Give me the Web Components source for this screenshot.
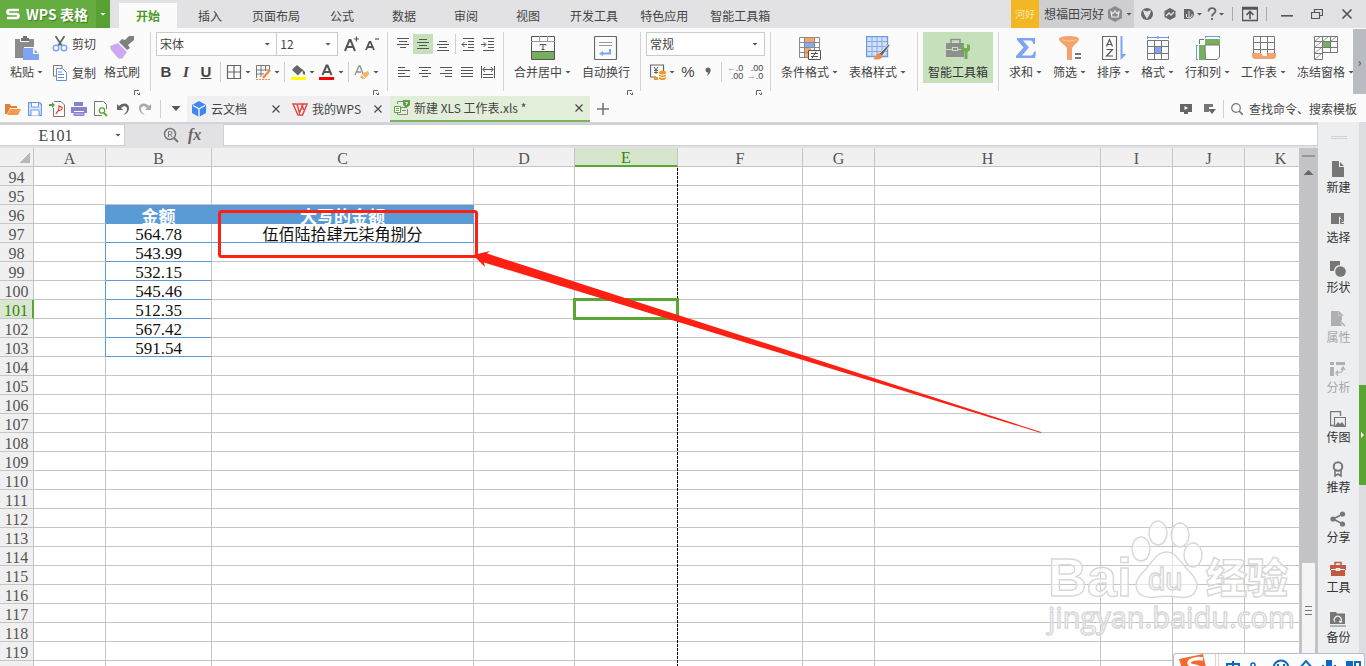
<!DOCTYPE html>
<html lang="zh-CN">
<head>
<meta charset="utf-8">
<title>新建 XLS 工作表.xls - WPS 表格</title>
<style>
  html, body { height: 100%; }
  body {
    margin: 0;
    overflow: hidden;
    font: 12px/16px "Noto Sans CJK SC", sans-serif;
    color: #444;
    --green: #5ba632;
    --bar: #e2e2e4;
    --cell-font: "Liberation Serif", "Noto Sans CJK SC", serif;
  }
</style>
</head>
<body>
<wps-window></wps-window>

<script>
/****************************
 * Icons, drawn on a pixel grid
 ****************************/
const ICONS = {
  wps: [14, 12, '<path d="M13 2H3.500a2 2 0 0 0 0 4h7a2 2 0 0 1 0 4H1" fill="none" stroke="#fff" stroke-width="2.600"/>'],
  shield: [16, 16, '<path d="M8 0l7 4v8l-7 4-7-4V4z" fill="#8c8c8f"/><path d="M4 6l2 1.500 2-2.500 2 2.500 2-1.500-1 5H5z" fill="none" stroke="#eee" stroke-width="1.200"/>'],
  shirt: [14, 14, '<circle cx="7" cy="7" r="6" fill="#666"/><path d="M3 3l4 1.500 4-1.500-1 4-3 5-3-5z" fill="#e2e2e4"/>'],
  chat: [14, 14, '<path d="M7 1l5.500 3v6L7 13l-5.500-3V4z" fill="#666"/><path d="M3 9l3-3 2 2 3-3" fill="none" stroke="#e2e2e4" stroke-width="1.300"/>'],
  docer: [12, 14, '<path d="M1 2h5a5 5 0 0 1 0 10H1z" fill="#666"/><path d="M6 4v7M3.500 7v3l2.500 1 3-1.500V7" fill="none" stroke="#e2e2e4"/>'],
  help: [10, 14, '<path d="M1.500 4.500C1.500 0 8.500 0 8.500 4c0 2.500-3.500 2.500-3.500 5.500" fill="none" stroke="#666" stroke-width="1.800"/><path d="M4 11h2v2H4z" fill="#666"/>'],
  ribbonUp: [16, 16, '<path d="M.5 1.500h15v13H.5zM.5 3h15" fill="none" stroke="#555" stroke-width="1.400"/><path d="M8 13V6M4.500 9L8 5.500 11.500 9" fill="none" stroke="#555" stroke-width="1.600"/>'],
  min: [12, 12, '<path d="M0 7h12v1.600H0z" fill="#555"/>'],
  restore: [12, 12, '<path d="M.5 4.500h8v6h-8zM3.500 4V1.500h8v6H9" fill="none" stroke="#555" stroke-width="1.200"/>'],
  close: [12, 12, '<path d="M1.500 1.500l9 9M10.500 1.500l-9 9" stroke="#555" stroke-width="1.700"/>'],

  paste: [24, 24, '<path d="M0 3h5v3h9V3h5v8H9v11H0z" fill="#8c8c8c"/><path d="M6 2h2V0h4v2h2v3H6z" fill="#737373"/><path d="M8 12h10l6 6v6H8z" fill="#7fa4f2"/><path d="M18 12v6h6z" fill="#fff"/><path d="M19.500 13.500V17H23z" fill="#7fa4f2"/>'],
  cut: [16, 16, '<path d="M3.500 0L10 10M12.500 0L6 10" stroke="#666" stroke-width="1.800"/><circle cx="4" cy="12" r="2.800" fill="none" stroke="#7fa4f2" stroke-width="1.500"/><circle cx="12" cy="12" r="2.800" fill="none" stroke="#7fa4f2" stroke-width="1.500"/>'],
  copy: [16, 16, '<path d="M4 11H1.500V.5H10V3" fill="none" stroke="#777"/><path d="M4.500 3.500h6l4 4v8h-10z" fill="#fff" stroke="#5f8ee8"/><path d="M6 7h4M6 9.500h6M6 12.500h6" stroke="#5f8ee8"/>'],
  brush: [24, 24, '<path d="M19 0h5v4l-6 5 2 3-3 2-8-8 3-3 3 1z" fill="#808080"/><path d="M8 7l9 9-5 7-2-1-1 1-8-9-1-4z" fill="#cfa8f4"/>'],
  fontUp: [16, 16, '<path d="M1 15L5.500 4h1L11 15M2.500 11h7" fill="none" stroke="#555" stroke-width="2"/><path d="M10 3h5M12.500.5v5" stroke="#555" stroke-width="1.200"/>'],
  fontDown: [16, 16, '<path d="M2 14L5.500 6h1L10 14M3 11h6" fill="none" stroke="#555" stroke-width="1.800"/><path d="M11 3h4" stroke="#555" stroke-width="1.200"/>'],
  border: [16, 16, '<path d="M1.500 1.500h13v13h-13zM8 2v12M2 8h12" fill="none" stroke="#666" stroke-width="1.200"/>'],
  drawBorder: [16, 16, '<path d="M1.500 14V1.500h13V6M6 2v11M10.500 2v5M2 6h12M2 10h7" fill="none" stroke="#777"/><path d="M8 14l7-8" stroke="#ec8a4f" stroke-width="2.400"/><path d="M1 15.500h14" stroke="#ec8a4f" stroke-dasharray="2 1"/>'],
  fill: [16, 16, '<path d="M2 6l5-5 6 5-5 5.500z" fill="#666"/><path d="M3 6c1-4 7-4 7 0" fill="none" stroke="#666"/><path d="M12 5l3 3v3l-2-1z" fill="#666"/><path d="M1 13h15v3H1z" fill="#ff0"/>'],
  fontColor: [16, 16, '<path d="M3.500 11L7.500 1.500h1l4 9.500M5 8h6" fill="none" stroke="#555" stroke-width="2"/><path d="M0 13h15v3H0z" fill="#f00"/>'],
  eraser: [16, 16, '<path d="M1 11L5 2h1l3 8M3 8h4" fill="none" stroke="#8f8f8f" stroke-width="1.300"/><path d="M9 9l5-2 1.500 3-5 5H8l-2-2z" fill="#f5b56b"/><path d="M8 11l3 3" stroke="#fff"/>'],
  vTop: [14, 14, '<path d="M1 1.500h12M3 4.500h8M1 7.500h12M4 10.500h6" stroke="#555"/>'],
  vMid: [14, 14, '<path d="M3 2.500h8M1 5.500h12M3 8.500h8M1 11.500h12" stroke="#555"/>'],
  vBot: [14, 14, '<path d="M3 4.500h8M1 7.500h12M3 10.500h8M1 13.500h12" stroke="#555"/>'],
  outdent: [14, 14, '<path d="M2 1.500h11M7 4.500h6M7 7.500h6M2 13.500h11M7 10.500h6M6 7.500H1M3.500 5L1 7.500 3.500 10" fill="none" stroke="#555"/>'],
  indent: [14, 14, '<path d="M2 1.500h11M7 4.500h6M7 7.500h6M2 13.500h11M7 10.500h6M0 7.500h5M2.500 5L5 7.500 2.500 10" fill="none" stroke="#555"/>'],
  left: [14, 14, '<path d="M1 2.500h7M1 5.500h12M1 8.500h7M1 11.500h12" stroke="#555"/>'],
  center: [14, 14, '<path d="M1 2.500h12M4 5.500h6M1 8.500h12M4 11.500h6" stroke="#555"/>'],
  right: [14, 14, '<path d="M1 2.500h12M6 5.500h7M1 8.500h12M6 11.500h7" stroke="#555"/>'],
  justify: [14, 14, '<path d="M1 2.500h12M1 5.500h12M1 8.500h12M1 11.500h12" stroke="#555"/>'],
  spread: [16, 14, '<path d="M1.500 1v12M14.500 1v12M3 4.500h10M5 2L3 4.500 5 7M11 2l2 2.500L11 7M3 9.500h10M3 12.500h10" fill="none" stroke="#555"/>'],
  merge: [24, 24, '<path d="M.5 15.500h23v8H.5z" fill="#76b05c"/><path d="M.5.5h23v23H.5zM0 15.500h24" fill="none" stroke="#555"/><path d="M0 5.500h24M8.500 0v5M16.500 0v5" stroke="#999"/><path d="M9 9.500V8.500h6v1M12 8.500v5M10.500 13.500h3" fill="none" stroke="#555"/>'],
  wrap: [24, 24, '<rect x=".5" y=".5" width="22" height="23" rx="1" fill="none" stroke="#666" stroke-width="1.200"/><path d="M5 6.500h13M5 9.500h13" stroke="#999"/><path d="M15 13h2v5.500H9V20l-4-2.500L9 15v1.500h6z" fill="#7fa4f2"/>'],
  money: [16, 16, '<path d="M6 13H.5V1h13v6" fill="none" stroke="#666" stroke-width="1.200"/><path d="M4 3l2 3 2-3M6 6v4M4 6.500h4M4 8.500h4" fill="none" stroke="#666"/><ellipse cx="12.500" cy="8.500" rx="3.500" ry="2" fill="#f2982b"/><path d="M9 10.500c2 1.500 5 1.500 7 0V12c-2 1.500-5 1.500-7 0zM9 13c2 1.500 5 1.500 7 0v1.500c-2 2-5 2-7 0zM4 13h4v3H4z" fill="#f2982b"/>'],
  comma: [8, 16, '<circle cx="4" cy="6" r="2.500" fill="#666"/><path d="M6.500 6c0 3-1.500 5-4 6 1.500-2 1.500-3 1.500-4z" fill="#666"/>'],
  cond: [24, 24, '<path d="M7 1h10v5H7zM7 12h6v10H7z" fill="#f6a56c"/><path d="M7 6h10v5H7z" fill="#86aaf3"/><path d="M1.500 1.500h20v20h-20zM6.500 1v20M16.500 1v13M1 6.500h21M1 11.500h21M1 16.500h9" fill="none" stroke="#8a8a8a"/><path d="M10.500 14.500h12v9h-12z" fill="#fff" stroke="#555"/><path d="M13 17.500h7M13 20.500h7M18 15.500l-4 7" stroke="#555"/>'],
  style: [24, 24, '<path d="M.5.5h21v20H.5z" fill="#d2e0f8" stroke="#6f99e8" stroke-width="1.400"/><path d="M1 5.500h20M1 10.500h20M1 15.500h20M6 1v19M11 1v19M16 1v19" stroke="#85a8ea"/><path d="M13 18L23 8l1 1-8 11z" fill="#666" stroke="#fbfbfb" stroke-width=".6"/><path d="M13 17l4 3c-2 4-6 4-10 3 3-1 3-5 6-6z" fill="#f08a3c"/>'],
  toolbox: [24, 24, '<path d="M0 7h18v6H0zM0 14h18v7H0z" fill="#8e8e8e"/><path d="M5 7V3.500h9V7" fill="none" stroke="#8e8e8e" stroke-width="1.500"/><path d="M6 11h6v4H6z" fill="#c5e0bb"/><path d="M7 12h4v2H7z" fill="#8e8e8e"/><path d="M15 9l3-1v4h3V8l3 1v5l-2.500 2v7h-3v-7L15 14z" fill="#6fae54"/>'],
  sum: [24, 24, '<path d="M3 2h18v6h-2c0-3-1-3.500-3-3.500H9l6 7-7 8h8c3 0 3-1 4-4h2l-1 6.500H2v-2l7.500-8.500L3 4z" fill="#7fa4f2"/>'],
  filter: [24, 24, '<path d="M1 3c0-4 20-4 20 0 0 3-7 7-7 10v11H9V13C9 10 1 6 1 3z" fill="#f2a46c"/><path d="M4 3.500c4 2 10 2 14 0" stroke="#fbc9a5" fill="none"/><path d="M17 17h6v2h-6zM17 21h6v2h-6z" fill="#777"/>'],
  sort: [24, 24, '<path d="M.5.5h14v23H.5z" fill="none" stroke="#666" stroke-width="1.200"/><path d="M4.500 10.500l3-7 3 7M5.500 8.500h4M4.500 13.500h6l-6 6.500h6.500" fill="none" stroke="#555" stroke-width="1.200"/><path d="M18.500 0h2v18h4l-6 6z" fill="#7fa4f2"/>'],
  format: [24, 24, '<path d="M1 1.500h22M1.500 0v3M22.500 0v3M12 0v3" stroke="#6f99e8"/><path d="M8.500 10.500h7v7h-7z" fill="#7fa4f2"/><path d="M1.500 4.500h21v19h-21zM8.500 5v18M15.500 5v18M2 10.500h20M2 17.500h20" fill="none" stroke="#777"/>'],
  rowcol: [24, 24, '<path d="M9 3h15v6H9zM3 9h6v15H3z" fill="#76b05c"/><path d="M9 9h14.500v12l-2.500 2.500H9.500z" fill="#fff" stroke="#777"/><path d="M9 .5h15M.5 9v15M9.500 0v2M23.500 0v2M0 9.500h2M0 23.500h2" stroke="#6f99e8"/><path d="M3.500 8V3.500H8" fill="none" stroke="#777"/>'],
  sheet: [24, 24, '<path d="M1.500.5h21v20h-21zM8.500 0v20M15.500 0v20M2 6.500h20M2 13.500h20" fill="none" stroke="#777"/><path d="M0 17h9l2 3h4l1-3h8v4l-2 2H2l-2-2z" fill="#f2a46c"/>'],
  freeze: [24, 24, '<path d="M9 6h7v6H9z" fill="#76b05c"/><path d="M.5.5h23v16h-15v7h-8zM8.500 1v16M16.500 1v16M1 5.500h22M1 11.500h22M1 17.500h8" fill="none" stroke="#777"/><path d="M1 5l5-4M9 5l5-4M17 5l5-4M1 11l6-5M1 17l6-5M1 23l6-5" stroke="#999"/>'],
  launcher: [6, 6, '<path d="M.5 5V.5H5M2.500 5.500h3v-3M3 3l2 2" fill="none" stroke="#666"/>'],

  open: [16, 16, '<path d="M0 3h5l1 2h6v2H5l-3 6H0z" fill="#e0803c"/><path d="M5 8h11l-3 6H2z" fill="#f59b4a"/>'],
  save: [14, 14, '<path d="M.5.5h11l2 2v11H.5z" fill="#dbe7fb" stroke="#6f99e8" stroke-width="1.300"/><path d="M3.500 1v4h7V1M3 13.500V8h8v5.500" fill="#fff" stroke="#6f99e8"/>'],
  pdf: [16, 16, '<path d="M5 .5h7l3.500 3.500v11.500H4.500V7" fill="none" stroke="#777"/><path d="M0 3h3V1l3 3-3 3V5H0z" fill="#5ba632"/><path d="M7 13c3-4 3-5 3-8 2 1 4 1 3 3s-4 1-5 3z" fill="none" stroke="#e0483c" stroke-width="1.200"/>'],
  print: [16, 16, '<path d="M3 1h9v4H3z" fill="#8583c9"/><path d="M0 6h16v6h-3v-2H3v2H0z" fill="#8583c9"/><path d="M3 11.500h10v3H3z" fill="#a9a7de" stroke="#8583c9"/>'],
  preview: [14, 16, '<path d="M8 14.500H.5V.5h9l3 3V8" fill="none" stroke="#777"/><circle cx="8" cy="9.500" r="2.700" fill="#fff" stroke="#5ba632" stroke-width="1.300"/><path d="M10 12l3 3" stroke="#5ba632" stroke-width="1.800"/>'],
  undo: [14, 16, '<path d="M1 3v6h6L5 7c3-3 6-2 6 1 0 2-1 4-4 6 4-1 6-4 6-7 0-5-6-6-10-2z" fill="#666"/>'],
  redo: [14, 16, '<path d="M13 3v6H7l2-2C6 4 3 5 3 8c0 2 1 4 4 6-4-1-6-4-6-7 0-5 6-6 10-2z" fill="#aaa"/>'],
  cloud: [16, 16, '<path d="M8 0l7 4v8l-7 4-7-4V4z" fill="#3f86f0"/><path d="M2 4.500l6 3.200 6-3.200M8 8v8" fill="none" stroke="#fff" stroke-width="1.300"/>'],
  mywps: [16, 14, '<path d="M1 2h4l2.500 9L11 2h4l-4.500 11H6z" fill="#fff" stroke="#e8433f" stroke-width="1.500"/><path d="M6 2h4l1.500 6" fill="none" stroke="#e8433f" stroke-width="1.500"/>'],
  xls: [16, 16, '<path d="M3.500 4V1.500H10M13.500 9v5.500h-10V13M6 7.500h6M8 10.500h4" fill="none" stroke="#888"/><path d="M.5 6.500h6v6h-6z" fill="#fff" stroke="#5ba632"/><path d="M2 8.500h3M2 10.500h3" stroke="#5ba632"/><path d="M9 0h7v5l-3.500 3L9 5z" fill="#5b9f48"/><path d="M11.500 2.500h2L12 5" fill="none" stroke="#fff"/>'],
  x: [8, 8, '<path d="M.5.5l7 7M7.500.5l-7 7" stroke="#444" stroke-width="1.100"/>'],
  plus: [12, 12, '<path d="M6 0v12M0 6h12" stroke="#777" stroke-width="1.600"/>'],
  play: [12, 12, '<path d="M0 1h12v8H8v2H4V9H0z" fill="#666"/><path d="M4.500 3v4L8 5z" fill="#fff"/>'],
  skin: [12, 12, '<path d="M0 1h9v3H5v5H0z" fill="#777"/><path d="M4 6h8L8 11z" fill="#666"/>'],
  search: [12, 12, '<circle cx="5" cy="5" r="4.300" fill="none" stroke="#777" stroke-width="1.200"/><path d="M8 8l4 4" stroke="#777" stroke-width="1.600"/>'],
  find: [16, 16, '<circle cx="7" cy="7" r="5.500" fill="none" stroke="#777" stroke-width="1.500"/><path d="M11 11l4 4" stroke="#777" stroke-width="2.200"/><path d="M5.500 10V4.500h2a1.500 1.500 0 0 1 0 3h-2M7.500 7.500L9 10" fill="none" stroke="#777"/>'],

  pNew: [16, 16, '<path d="M2 0h7v6h5v10H2z" fill="#777"/><path d="M10 1l4 4h-4z" fill="#777"/>'],
  pSelect: [16, 16, '<path d="M1 2h13v11H1z" fill="#777"/><path d="M9 5v9l2-2h4z" fill="#eceef0"/><path d="M10 7v6l2-2h2z" fill="#777"/>'],
  pShape: [16, 16, '<path d="M0 0h10v4a6 6 0 0 0-6 6H0z" fill="#777"/><circle cx="10.500" cy="10.500" r="5.300" fill="#777"/>'],
  pProp: [16, 16, '<path d="M1 0h7v5h4v4l-2 2 2 4H1z" fill="#b0b0b2"/><path d="M9 1l3 3H9zM8 8l7 7" fill="#b0b0b2" stroke="#b0b0b2" stroke-width="1.500"/>'],
  pAnalyse: [16, 16, '<path d="M0 1h4v3H0zM6 1h9v3H6zM0 6h4v9H0z" fill="#b0b0b2"/><path d="M6 12c5 0 7-1 7-5M11 9l2-3 2 3M8 9.500L6 12l2 3" fill="none" stroke="#b0b0b2" stroke-width="1.300"/>'],
  pImage: [16, 16, '<path d="M4 14.500H.5V.5h10V5" fill="none" stroke="#777" stroke-width="1.300"/><path d="M4.500 6.500h11v9h-11z" fill="none" stroke="#777" stroke-width="1.200"/><path d="M5 15l3-4 2 2 2-2 3 4z" fill="#777"/>'],
  pMedal: [16, 16, '<circle cx="8" cy="5.500" r="4.300" fill="none" stroke="#777" stroke-width="2"/><path d="M5 9v6l3-2 3 2V9" fill="none" stroke="#777" stroke-width="1.600"/>'],
  pShare: [16, 16, '<path d="M13 3L3 8l10 5" fill="none" stroke="#777" stroke-width="1.500"/><circle cx="12.500" cy="3" r="2.600" fill="#777"/><circle cx="3" cy="8" r="2.600" fill="#777"/><circle cx="12.500" cy="13" r="2.600" fill="#777"/>'],
  pTool: [16, 16, '<path d="M0 4h16v5H0zM1 9h14v6H1z" fill="#c05a41"/><path d="M5 4V1.500h6V4" fill="none" stroke="#c05a41" stroke-width="1.500"/><path d="M1 8.500h14M6 7.500h4v2H6z" stroke="#eceef0" fill="#c05a41"/>'],
  pBackup: [16, 16, '<path d="M0 1h6l1 1.500h8V13H0z" fill="#777"/><path d="M5 11a3.500 3.500 0 1 1 5.500 0M9 10l1.500 1.500L12 10" fill="none" stroke="#eceef0" stroke-width="1.200"/><path d="M0 15h16" stroke="#777"/>'],
};

const CARET = '<i class="caret"></i>';
const SHARED = `
  *, *::before { box-sizing: border-box; }
  button { font: inherit; color: inherit; background: none; border: 0; padding: 0; margin: 0; }
  input, select { font: inherit; color: inherit; border: 0; padding: 0; background: none; outline: none; appearance: none; min-width: 0; }
  .caret { flex: none; width: 6px; height: 3px; background: #555; clip-path: polygon(0 0, 100% 0, 50% 100%); }
  .sep { flex: none; width: 1px; background: #d0d0d2; }
`;

function define(name, css, html) {
  customElements.define(name, class extends HTMLElement {
    constructor() {
      super();
      this.attachShadow({ mode: 'open' });
    }
    connectedCallback() {
      const body = typeof html === 'function' ? html(this) : html;
      this.shadowRoot.innerHTML = `<style>${SHARED}${css}</style>${body}`;
    }
  });
}

const icon = name => `<wps-icon name="${name}"></wps-icon>`;

define('wps-icon', `
  :host { display: inline-flex; flex: none; }
  svg { display: block; }
`, el => {
  const [w, h, d] = ICONS[el.getAttribute('name')];
  return `<svg width="${w}" height="${h}" viewBox="0 0 ${w} ${h}" aria-hidden="true">${d}</svg>`;
});

/****************************
 * Title bar
 ****************************/
define('title-bar', `
  :host { display: flex; height: 28px; flex: none; background: var(--bar); }
  .brand { display: flex; align-items: center; width: 96px; padding-left: 6px; gap: 6px; background: #65ad40; color: #fff; font: bold 14px/20px "Noto Sans CJK SC", sans-serif; text-shadow: 1px 1px 1px #3d7a1f; white-space: nowrap; }
  .menu { display: flex; align-items: center; justify-content: center; width: 14px; background: #58a033; }
  .menu .caret { background: #fff; }
  nav { display: flex; flex: 1; padding-left: 7px; white-space: nowrap; }
  nav button { padding: 4px 19px 0; }
  nav button.wide { padding: 4px 11px 0; }
  nav button.on { margin: 3px 2px 0; padding: 0 17px; background: #fbfbfb; color: #4a9a22; font-weight: bold; }
  .user { display: flex; align-items: center; background: #cfcfd1; width: 123px; gap: 3px; white-space: nowrap; }
  .avatar { align-self: stretch; display: grid; place-items: center; width: 28px; margin-right: 2px; background: #f2b722; color: #fbe7a8; font-size: 10px; }
  .tools { display: flex; align-items: center; padding: 0 4px 0 1px; }
  .tools button { display: flex; align-items: center; justify-content: center; gap: 2px; min-width: 23px; height: 24px; }
  .tools .sep { height: 14px; margin: 0 5px; background: #aaa; }
  .tools .win { width: 30px; }
`, `
  <div class="brand">${icon('wps')}<span>WPS 表格</span></div>
  <button class="menu" aria-label="菜单">${CARET}</button>
  <nav>
    <button class="on">开始</button><button>插入</button><button class="wide">页面布局</button>
    <button>公式</button><button>数据</button><button>审阅</button><button>视图</button>
    <button class="wide">开发工具</button><button class="wide">特色应用</button><button class="wide">智能工具箱</button>
  </nav>
  <div class="user"><span class="avatar">河好</span><span>想福田河好</span>${icon('shield')}${CARET}</div>
  <div class="tools">
    <button aria-label="皮肤">${icon('shirt')}</button>
    <button aria-label="消息">${icon('chat')}</button>
    <button aria-label="稻壳">${icon('docer')}${CARET}</button>
    <button aria-label="帮助">${icon('help')}${CARET}</button>
    <i class="sep"></i>
    <button aria-label="隐藏功能区">${icon('ribbonUp')}</button>
    <i class="sep"></i>
    <button class="win" aria-label="最小化">${icon('min')}</button>
    <button class="win" aria-label="还原">${icon('restore')}</button>
    <button class="win" aria-label="关闭">${icon('close')}</button>
  </div>
`);

/****************************
 * Ribbon
 ****************************/
define('ribbon-group', `
  :host { display: flex; flex-direction: column; flex: none; height: 59px; border-right: 1px solid #d4d4d6; padding: 0 5px; box-sizing: border-box; }
  :host([last]) { flex: 1; border: 0; overflow: hidden; }
  :host([big]) { padding: 0 10px; }
  .body { display: flex; gap: 11px; height: 51px; }
  :host([rows]) .body { flex-direction: column; gap: 5px; }
  .foot { display: flex; flex: 1; align-items: flex-end; justify-content: flex-end; }
  :host(:not([big])) .foot { padding-right: 3px; }
`, el => `
  <div class="body"><slot></slot></div>
  <div class="foot">${el.hasAttribute('launch') ? `<button aria-label="更多设置">${icon('launcher')}</button>` : ''}</div>
`);

define('big-tool', `
  :host { display: block; flex: none; }
  button { display: flex; flex-direction: column; align-items: center; gap: 4px; height: 51px; padding-top: 4px; white-space: nowrap; }
  :host([on]) button { background: #c5e0bb; padding: 4px 5px 0; color: #333; }
  span { display: flex; align-items: center; gap: 3px; }
`, el => `<button>${icon(el.getAttribute('icon'))}<span><slot></slot>${el.hasAttribute('menu') ? CARET : ''}</span></button>`);

define('small-tool', `
  :host { display: block; flex: none; }
  button { display: flex; align-items: center; justify-content: center; gap: 3px; width: 20px; height: 20px; }
  :host([menu]) button { width: 25px; }
  :host([text]) button { width: auto; gap: 4px; white-space: nowrap; }
  :host([on]) button { background: #c5e0bb; }
`, el => {
  const name = el.getAttribute('icon');
  return `<button title="${el.title}">${name ? icon(name) : ''}<slot></slot>${el.hasAttribute('menu') ? CARET : ''}</button>`;
});

define('drop-box', `
  :host { display: block; }
  label { display: flex; align-items: center; height: 24px; padding: 0 6px 0 3px; border: 1px solid #cbcbcd; background: #fff; }
  select { flex: 1; height: 20px; }
`, el => `<label><select aria-label="${el.getAttribute('label')}"><option>${el.getAttribute('value')}</option></select>${CARET}</label>`);

define('ribbon-bar', `
  :host { display: flex; flex: none; height: 67px; padding-top: 4px; background: #fbfbfb; box-sizing: border-box; }
  .row { display: flex; align-items: center; height: 24px; }
  .row + .row { height: 22px; }
  .clip { width: 151px; }
  .font { width: 237px; }
  .align { width: 116px; }
  .merge { width: 137px; }
  .number { width: 130px; }
  .cond { width: 147px; }
  .stack { display: flex; flex-direction: column; gap: 9px; padding-top: 2px; margin: 0 -3px 0 -2px; }
  .gap { gap: 4px; }
  .gap .sep { margin-right: 1px; }
  .sep { height: 20px; }
  .biu { display: flex; font: bold 15px/20px "Liberation Sans", sans-serif; }
  .spread { justify-content: space-around; }
  .scroll { width: 13px; margin-top: -3px; height: 65px; background: #b9bbc3; color: #444; }
  .dec { font: 9px/8px "Liberation Sans", sans-serif; text-align: right; }
  .dec b { color: #6f99e8; }
`, `
  <ribbon-group class="clip" big launch>
    <big-tool icon="paste" menu>粘贴</big-tool>
    <div class="stack">
      <small-tool icon="cut" text>剪切</small-tool>
      <small-tool icon="copy" text>复制</small-tool>
    </div>
    <big-tool icon="brush">格式刷</big-tool>
  </ribbon-group>
  <ribbon-group class="font" rows launch>
    <div class="row">
      <drop-box style="width:122px" label="字体" value="宋体"></drop-box>
      <drop-box style="width:62px;margin-left:-1px" label="字号" value="12"></drop-box>
      <small-tool style="margin-left:4px" icon="fontUp" title="增大字号"></small-tool>
      <small-tool icon="fontDown" title="减小字号"></small-tool>
    </div>
    <div class="row gap">
      <div class="biu">
        <small-tool title="加粗">B</small-tool>
        <small-tool title="倾斜"><em style="font-family:'Liberation Serif'">I</em></small-tool>
        <small-tool title="下划线"><u>U</u></small-tool>
      </div>
      <i class="sep"></i>
      <small-tool icon="border" menu title="边框"></small-tool>
      <small-tool icon="drawBorder" menu title="绘制边框"></small-tool>
      <i class="sep"></i>
      <small-tool icon="fill" menu title="填充颜色"></small-tool>
      <small-tool icon="fontColor" menu title="字体颜色"></small-tool>
      <i class="sep"></i>
      <small-tool icon="eraser" menu title="清除"></small-tool>
    </div>
  </ribbon-group>
  <ribbon-group class="align" rows>
    <div class="row">
      <small-tool icon="vTop" title="顶端对齐"></small-tool>
      <small-tool icon="vMid" on title="垂直居中"></small-tool>
      <small-tool icon="vBot" title="底端对齐"></small-tool>
      <i class="sep" style="margin:0 2px"></i>
      <small-tool icon="outdent" title="减少缩进"></small-tool>
      <small-tool icon="indent" title="增加缩进"></small-tool>
    </div>
    <div class="row spread">
      <small-tool icon="left" title="左对齐"></small-tool>
      <small-tool icon="center" title="居中"></small-tool>
      <small-tool icon="right" title="右对齐"></small-tool>
      <small-tool icon="justify" title="两端对齐"></small-tool>
      <small-tool icon="spread" title="分散对齐"></small-tool>
    </div>
  </ribbon-group>
  <ribbon-group class="merge" big launch style="padding-right:7px">
    <big-tool icon="merge" menu>合并居中</big-tool>
    <big-tool icon="wrap">自动换行</big-tool>
  </ribbon-group>
  <ribbon-group class="number" rows launch>
    <drop-box label="数字格式" value="常规"></drop-box>
    <div class="row" style="height:22px;gap:3px;padding-left:4px">
      <small-tool icon="money" menu title="货币"></small-tool>
      <div class="biu" style="font-weight:normal"><small-tool title="百分比">%</small-tool><small-tool icon="comma" title="千位分隔"></small-tool></div>
      <i class="sep"></i>
      <div class="biu">
        <small-tool title="增加小数位数"><span class="dec"><b>←</b>.0<br>.00</span></small-tool>
        <small-tool title="减少小数位数"><span class="dec">.00<br><b>→</b>.0</span></small-tool>
      </div>
    </div>
  </ribbon-group>
  <ribbon-group class="cond" big>
    <big-tool icon="cond" menu>条件格式</big-tool>
    <big-tool icon="style" menu>表格样式</big-tool>
  </ribbon-group>
  <ribbon-group>
    <big-tool icon="toolbox" on>智能工具箱</big-tool>
  </ribbon-group>
  <ribbon-group big last style="padding-right:0">
    <big-tool icon="sum" menu>求和</big-tool>
    <big-tool icon="filter" menu>筛选</big-tool>
    <big-tool icon="sort" menu>排序</big-tool>
    <big-tool icon="format" menu>格式</big-tool>
    <big-tool icon="rowcol" menu>行和列</big-tool>
    <big-tool icon="sheet" menu>工作表</big-tool>
    <big-tool icon="freeze" menu>冻结窗格</big-tool>
  </ribbon-group>
  <button class="scroll" aria-label="向右滚动">›</button>
`);

/****************************
 * Quick access and document tabs
 ****************************/
define('doc-tab', `
  :host { display: flex; align-items: center; height: 26px; padding: 0 8px 0 4px; gap: 4px; background: #f0f0f2; white-space: nowrap; box-sizing: border-box; }
  :host([on]) { background: #e2eed9; border-bottom: 2px solid #7bb461; padding-right: 7px; }
  span { flex: 1; }
  button { display: flex; }
`, el => `${icon(el.getAttribute('icon'))}<span><slot></slot></span><button aria-label="关闭标签">${icon('x')}</button>`);

define('doc-bar', `
  :host { display: flex; flex: none; align-items: center; height: 27px; background: #fbfbfb; padding-left: 2px; box-sizing: border-box; }
  .quick { display: flex; align-items: center; }
  .quick button { display: grid; place-items: center; width: 22px; height: 22px; }
  .sep { height: 18px; margin: 0 4px; }
  .quick .more .caret { width: 9px; height: 5px; }
  .tabs { display: flex; flex: 1; align-items: center; }
  .plus { margin-left: 7px; display: flex; }
  .find { display: flex; align-items: center; white-space: nowrap; padding-right: 9px; gap: 6px; }
  .find .sep { margin: 0 1px; }
  .find button { display: flex; }
  .find .wide { margin-right: 6px; }
`, `
  <div class="quick">
    ${[['open', '打开'], ['save', '保存'], ['pdf', '输出为PDF'], ['print', '打印'], ['preview', '打印预览'], ['undo', '撤销'], ['redo', '恢复']]
      .map(([n, t]) => `<button title="${t}">${icon(n)}</button>`).join('')}
    <i class="sep"></i>
    <button class="more" title="自定义">${CARET}</button>
  </div>
  <div class="tabs">
    <doc-tab icon="cloud" style="width:101px">云文档</doc-tab>
    <doc-tab icon="mywps" style="width:102px">我的WPS</doc-tab>
    <doc-tab icon="xls" on style="width:200px">新建 XLS 工作表.xls *</doc-tab>
    <button class="plus" title="新建标签">${icon('plus')}</button>
  </div>
  <div class="find">
    <button class="wide" title="演示">${icon('play')}</button>
    <button title="外观">${icon('skin')}</button>
    <i class="sep"></i>
    ${icon('search')}<button>查找命令、搜索模板</button>
  </div>
`);

/****************************
 * Formula bar
 ****************************/
define('formula-bar', `
  :host { display: flex; flex: none; height: 26px; padding-bottom: 2px; border-top: 2px solid #d3d3da; background: var(--bar); font-family: var(--cell-font); font-size: 16px; box-sizing: border-box; }
  .name { display: flex; align-items: center; width: 125px; padding-right: 3px; background: #fff; border: 1px solid #d0d0d6; border-left: 0; }
  .name input { flex: 1; text-align: center; padding: 2px 4px 0 0; }
  .fx { display: flex; align-items: center; width: 98px; padding-left: 38px; gap: 9px; }
  .fx em { font-weight: bold; color: #666; }
  .text { flex: 1; background: #fff; border: 1px solid #d0d0d6; }
`, `
  <label class="name"><input aria-label="名称框" value="E101">${CARET}</label>
  <div class="fx">${icon('find')}<em>fx</em></div>
  <input class="text" aria-label="编辑栏">
`);

/****************************
 * Sheet
 ****************************/
const COLS = { A: 72, B: 106, C: 262, D: 101, E: 103, F: 125, G: 72, H: 226, I: 72, J: 72, K: 72 };
const AMOUNTS = { 97: '564.78', 98: '543.99', 99: '532.15', 100: '545.46', 101: '512.35', 102: '567.42', 103: '591.54' };
const WORDS = { 97: '伍佰陆拾肆元柒角捌分' };

function cell(col, row) {
  if (row === 96 && (col === 'B' || col === 'C')) return `<td class="head">${col === 'B' ? '金额' : '大写的金额'}</td>`;
  if (col === 'A' && row >= 96 && row <= 103) return '<td class="edge"></td>';
  if (col === 'B' && AMOUNTS[row]) return `<td class="amount">${AMOUNTS[row]}</td>`;
  if (col === 'C' && WORDS[row]) return `<td class="words edge">${WORDS[row]}</td>`;
  return '<td></td>';
}

function sheetTable() {
  const names = Object.keys(COLS);
  let rows = '';
  for (let r = 94; r <= 119; r++) {
    rows += `<tr><th scope="row"${r === 101 ? ' class="on"' : ''}>${r}</th>${names.map(c => cell(c, r)).join('')}</tr>`;
  }
  rows += `<tr><th></th>${names.map(() => '<td></td>').join('')}</tr>`;
  return `
    <table>
      <colgroup><col style="width:34px">${names.map(c => `<col style="width:${COLS[c]}px">`).join('')}</colgroup>
      <thead><tr><th class="corner"></th>${names.map(c => `<th scope="col"${c === 'E' ? ' class="on"' : ''}>${c}</th>`).join('')}</tr></thead>
      <tbody>${rows}</tbody>
    </table>`;
}

define('sheet-grid', `
  :host { display: block; position: relative; flex: 1; min-width: 0; overflow: hidden; background: #fff; font: 16px/14px var(--cell-font); }
  table { width: 1317px; table-layout: fixed; border-collapse: separate; border-spacing: 0; }
  th, td { height: 19px; padding: 4px 0 0; border: solid #c5c5c5; border-width: 0 1px 1px 0; text-align: center; white-space: nowrap; line-height: 14px; }
  th { font-weight: normal; color: #555; background: #f0f0f0; }
  td { color: #111; }
  thead th.on { background: #d6e6cc; color: #37850f; border-bottom: 2px solid var(--green); padding-top: 3px; }
  tbody th.on { background: #d9e7d0; color: #37850f; border-right: 2px solid var(--green); }
  .corner { background: linear-gradient(135deg, #f0f0f0 50%, #b9b9b9 50%) 20px 5px / 10px 10px no-repeat #f0f0f0; }
  .head { background: #5b9bd5; border-color: #5b9bd5; color: #fff; font: bold 17px/14px "Noto Sans CJK SC", sans-serif; }
  .edge { border-right-color: #5b9bd5; }
  .amount, .words { border-bottom-color: #5b9bd5; }
  .amount { font-size: 17px; }
  .break { position: absolute; left: 677px; top: 20px; bottom: 0; width: 1px; background: repeating-linear-gradient(#000 0 3px, #fff 3px 4px); }
  .cursor { position: absolute; left: 573px; top: 150px; width: 106px; height: 22px; border: 3px solid var(--green); }
  .mark { position: absolute; left: 0; top: 0; pointer-events: none; }
  baidu-mark { position: absolute; right: 0; bottom: 0; }
`, `
  ${sheetTable()}
  <div class="break"></div>
  <div class="cursor"></div>
  <svg class="mark" width="1060" height="300" fill="#fe2013">
    <rect x="219.500" y="63.500" width="257" height="45" rx="2" fill="none" stroke="#fe2013" stroke-width="3"/>
    <path d="M473 107L490 103L487 105.500L1041 284V285L484 114.500L485 119z"/>
  </svg>
  <baidu-mark></baidu-mark>
`);

define('baidu-mark', `
  :host { display: block; pointer-events: none; }
  svg { display: block; }
  text, ellipse, .pad { fill: #fff; fill-opacity: .55; stroke: #d8d8d8; stroke-width: 1.400; }
  text { font-family: "Open Sans", sans-serif; font-weight: bold; }
  .latin { font-family: "Liberation Sans", sans-serif; }
  .cn { font-family: "Noto Sans CJK SC", sans-serif; font-weight: 900; }
`, `
  <svg width="259" height="156">
    <text class="latin" x="8" y="86" font-size="54">Bai</text>
    <ellipse cx="101" cy="39" rx="9" ry="12"/>
    <ellipse cx="118" cy="23" rx="9" ry="12"/>
    <ellipse cx="140" cy="25" rx="9" ry="12"/>
    <ellipse cx="153" cy="45" rx="9" ry="12"/>
    <path class="pad" d="M127 42c9 0 13 10 20 17 8 8 12 14 9 21-3 8-12 8-18 7-8-1-14-1-22 0-8 1-16 0-19-7-3-8 2-14 9-21 7-8 11-17 21-17z"/>
    <text class="latin" x="108" y="80" font-size="31" style="font-weight:normal">du</text>
    <text class="cn" x="166" y="83" font-size="41">经验</text>
    <text x="8" y="118" font-size="29" style="font-weight:normal">jingyan.baidu.com</text>
  </svg>
`);

define('scroll-bar', `
  :host { display: flex; flex-direction: column; align-items: center; width: 19px; background: #c4c4c6; padding-top: 7px; box-sizing: border-box; }
  .split { width: 13px; height: 2px; background: #999; }
  .up { width: 10px; height: 5px; margin-top: 13px; background: #666; clip-path: polygon(50% 0, 100% 100%, 0 100%); }
  .track { flex: 394; }
  .thumb { flex: 97; width: 13px; display: flex; flex-direction: column; align-items: center; justify-content: center; gap: 3px; background: #f4f4f4; padding-bottom: 8px; }
  .thumb i { width: 7px; height: 1px; background: #777; }
`, `<i class="split"></i><button class="up" aria-label="向上滚动"></button><div class="track"></div><div class="thumb"><i></i><i></i><i></i></div>`);

/****************************
 * Task pane
 ****************************/
define('task-pane', `
  :host { display: flex; flex: none; }
  .items { display: flex; flex-direction: column; align-items: center; width: 41px; padding-top: 14px; background: #eceef0; overflow: hidden; }
  .grip { flex: none; width: 16px; height: 3px; border: solid #cfd2da; border-width: 1px 0; margin-bottom: 22px; }
  button { display: flex; flex-direction: column; align-items: center; flex: none; height: 50px; gap: 2px; white-space: nowrap; color: #333; }
  button:disabled { color: #a8a8aa; }
  .rail { display: flex; flex-direction: column; justify-content: center; width: 7px; background: #dcdde0; padding-top: 82px; }
  .tab { display: grid; place-items: center; height: 100px; background: var(--green); }
  .tab::before { content: ""; width: 3px; height: 6px; background: #fff; clip-path: polygon(0 0, 100% 50%, 0 100%); }
`, `
  <div class="items">
    <i class="grip"></i>
    ${[['pNew', '新建'], ['pSelect', '选择'], ['pShape', '形状'], ['pProp', '属性', 1], ['pAnalyse', '分析', 1], ['pImage', '传图'], ['pMedal', '推荐'], ['pShare', '分享'], ['pTool', '工具'], ['pBackup', '备份']]
      .map(([n, t, off]) => `<button${off ? ' disabled' : ''}>${icon(n)}${t}</button>`).join('')}
  </div>
  <div class="rail"><button class="tab" aria-label="展开"></button></div>
`);

/****************************
 * Input method bar, half below the screen edge
 ****************************/
define('ime-bar', `
  :host { display: block; position: absolute; right: 1px; bottom: 0; width: 192px; height: 13px; overflow: hidden; background: #fbfdff; border: 1px solid #b4bfcc; border-bottom: 0; border-radius: 3px 3px 0 0; box-sizing: border-box; }
  svg { display: block; }
`, `
  <svg width="190" height="30" fill="none" stroke="#0c68c2" stroke-width="2">
    <path d="M5 5L29 0l5 22-22 5z" fill="#f4692f" stroke="none"/>
    <path d="M29 5c-5-1-14 0-14 4s12 2 12 7" stroke="#fff" stroke-width="3.500"/>
    <path d="M41.500 0v30M44.500 0v30" stroke="#fbcdb6" stroke-width="1"/>
    <path d="M53 10h12v8H53zM59 7v14"/>
    <circle cx="79" cy="11" r="2" stroke-width="1.500"/>
    <circle cx="107" cy="14" r="7.500"/><path d="M104 10v3M110 10v3"/>
    <path d="M125 15l7-8 7 8"/>
    <path d="M152 6h6v9h-6z" fill="#0c68c2" stroke="none"/><path d="M149 11c0 8 12 8 12 0"/>
    <path d="M172 7h7v8h-7z" fill="#0c68c2" stroke="none"/><path d="M181 8h5v7h-5z"/>
  </svg>
`);

define('wps-window', `
  :host { display: flex; flex-direction: column; height: 100%; position: relative; overflow: hidden; }
  .main { display: flex; flex: 1; min-height: 0; }
  .left { display: flex; flex-direction: column; flex: 1; min-width: 0; }
  .work { display: flex; flex: 1; min-height: 0; }
`, `
  <title-bar></title-bar>
  <ribbon-bar></ribbon-bar>
  <doc-bar></doc-bar>
  <div class="main">
    <div class="left">
      <formula-bar></formula-bar>
      <div class="work"><sheet-grid></sheet-grid><scroll-bar></scroll-bar></div>
    </div>
    <task-pane></task-pane>
  </div>
  <ime-bar></ime-bar>
`);
</script>
</body>
</html>
